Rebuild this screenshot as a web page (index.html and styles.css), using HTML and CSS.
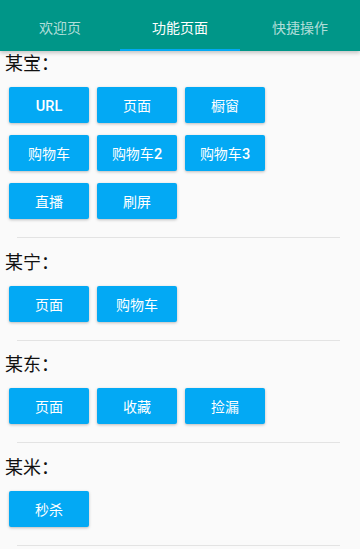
FILE: index.html
```html
<!DOCTYPE html>
<html lang="zh">
<head>
<meta charset="utf-8">
<title>功能页面</title>
<link rel="stylesheet" href="styles.css">
</head>
<body>
<header class="tabs">
  <div class="tab">欢迎页</div>
  <div class="tab active">功能页面</div>
  <div class="tab">快捷操作</div>
</header>
<main class="content">
  <section class="group">
    <div class="title">某宝：</div>
    <div class="grid">
      <button class="btn"><span class="num">URL</span></button>
      <button class="btn">页面</button>
      <button class="btn">橱窗</button>
      <button class="btn">购物车</button>
      <button class="btn">购物车<span class="num">2</span></button>
      <button class="btn">购物车<span class="num">3</span></button>
      <button class="btn">直播</button>
      <button class="btn">刷屏</button>
    </div>
    <hr class="divider">
  </section>
  <section class="group">
    <div class="title">某宁：</div>
    <div class="grid">
      <button class="btn">页面</button>
      <button class="btn">购物车</button>
    </div>
    <hr class="divider">
  </section>
  <section class="group">
    <div class="title">某东：</div>
    <div class="grid">
      <button class="btn">页面</button>
      <button class="btn">收藏</button>
      <button class="btn">捡漏</button>
    </div>
    <hr class="divider">
  </section>
  <section class="group">
    <div class="title">某米：</div>
    <div class="grid">
      <button class="btn">秒杀</button>
    </div>
    <hr class="divider">
  </section>
</main>
</body>
</html>
```
FILE: styles.css
```css
* { box-sizing: border-box; }
html, body {
  margin: 0;
  padding: 0;
  background: #fafafa;
  font-family: Roboto, "Noto Sans CJK SC", sans-serif;
  overflow: hidden;
}
.tabs {
  position: relative;
  z-index: 2;
  display: flex;
  height: 51px;
  background: #009688;
  box-shadow: 0 2px 4px rgba(0,0,0,0.22);
}
.tab {
  flex: 1;
  display: flex;
  align-items: center;
  justify-content: center;
  padding-top: 4px;
  font-family: "Noto Sans CJK SC", sans-serif;
  font-size: 14px;
  color: rgba(255,255,255,0.7);
  border-bottom: 2px solid transparent;
}
.tab.active {
  color: #fff;
  border-bottom-color: #03a9f4;
}
.content {
  display: flex;
  flex-direction: column;
}
.title {
  padding-left: 5px;
  font-family: "Noto Sans CJK SC", sans-serif;
  font-size: 18px;
  line-height: 22px;
  padding-bottom: 8px;
  color: #111;
}
.grid {
  display: grid;
  grid-template-columns: repeat(3, 88px);
  padding-left: 5px;
}
.btn {
  margin: 6px 4px;
  height: 36px;
  border: 0;
  border-radius: 2px;
  background: #03a9f4;
  color: #fff;
  font-family: "Noto Sans CJK SC", sans-serif;
  font-size: 14px;
  padding: 0;
  box-shadow: 0 1px 3px rgba(0,0,0,0.25);
}
.num {
  font-family: Roboto, sans-serif;
  font-weight: 500;
  font-size: 14.5px;
}
.divider {
  border: 0;
  height: 1px;
  background: #e3e3e3;
  margin: 12px 20px 11.7px 17px;
}
```
